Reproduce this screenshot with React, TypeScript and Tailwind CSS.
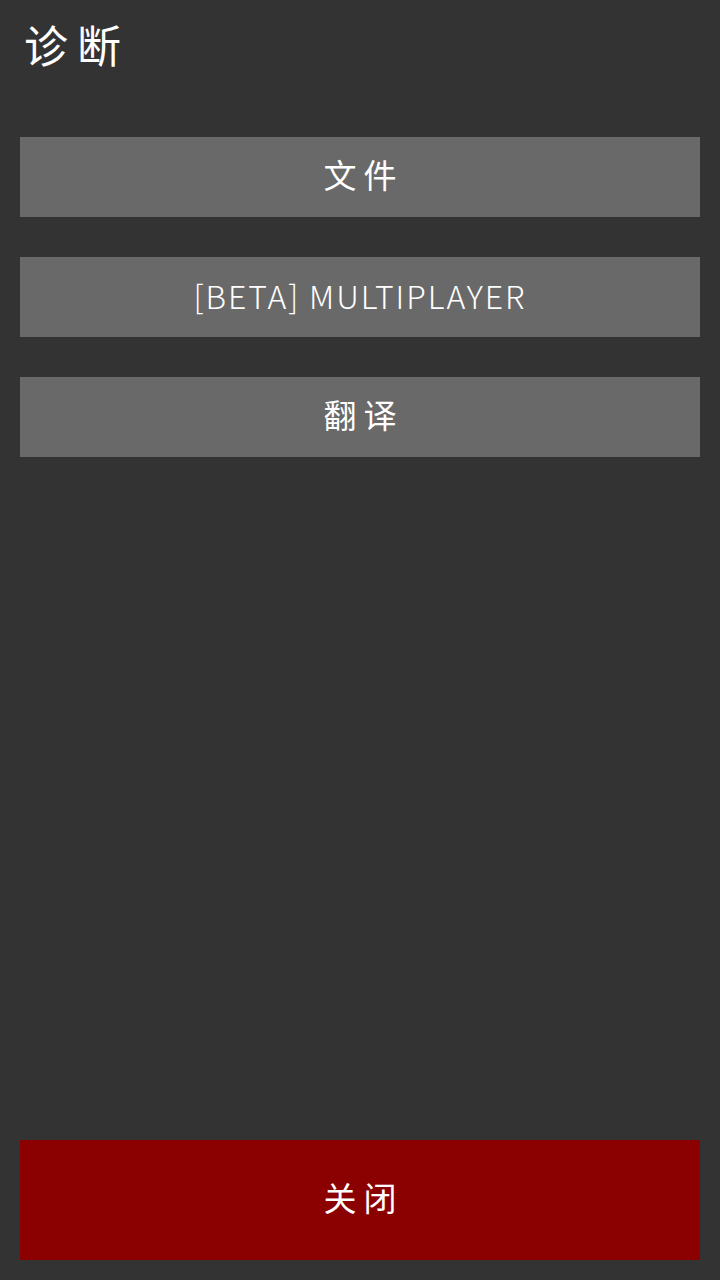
const Btn = ({ children, cls }: { children: React.ReactNode; cls: string }) => (
  <button className={`block w-full ${cls}`}>{children}</button>
);

export default function App() {
  const font = "[font-family:'Noto_Sans_CJK_SC','Noto_Sans',sans-serif]";
  const cjk = "h-20 bg-[#696969] text-[33px] leading-[74px] pb-[6px] pl-[7px] tracking-[7px]";
  return (
    <div className={`w-[720px] h-[1280px] bg-[#333333] flex flex-col px-5 pb-5 text-white ${font}`}>
      <div className="h-[97px] pt-[14px] pl-[4px] text-[44px] leading-[60px] tracking-[9px]">诊断</div>
      <div className="flex flex-col gap-10 mt-10">
        <Btn cls={cjk}>文件</Btn>
        <Btn cls="h-20 bg-[#696969] text-[32px] leading-[76px] pb-1 tracking-[1.9px] font-light">[BETA] MULTIPLAYER</Btn>
        <Btn cls={cjk}>翻译</Btn>
      </div>
      <Btn cls="mt-auto h-[120px] bg-[#8b0000] text-[33px] leading-[114px] pb-[6px] pl-[7px] tracking-[7px]">关闭</Btn>
    </div>
  );
}
